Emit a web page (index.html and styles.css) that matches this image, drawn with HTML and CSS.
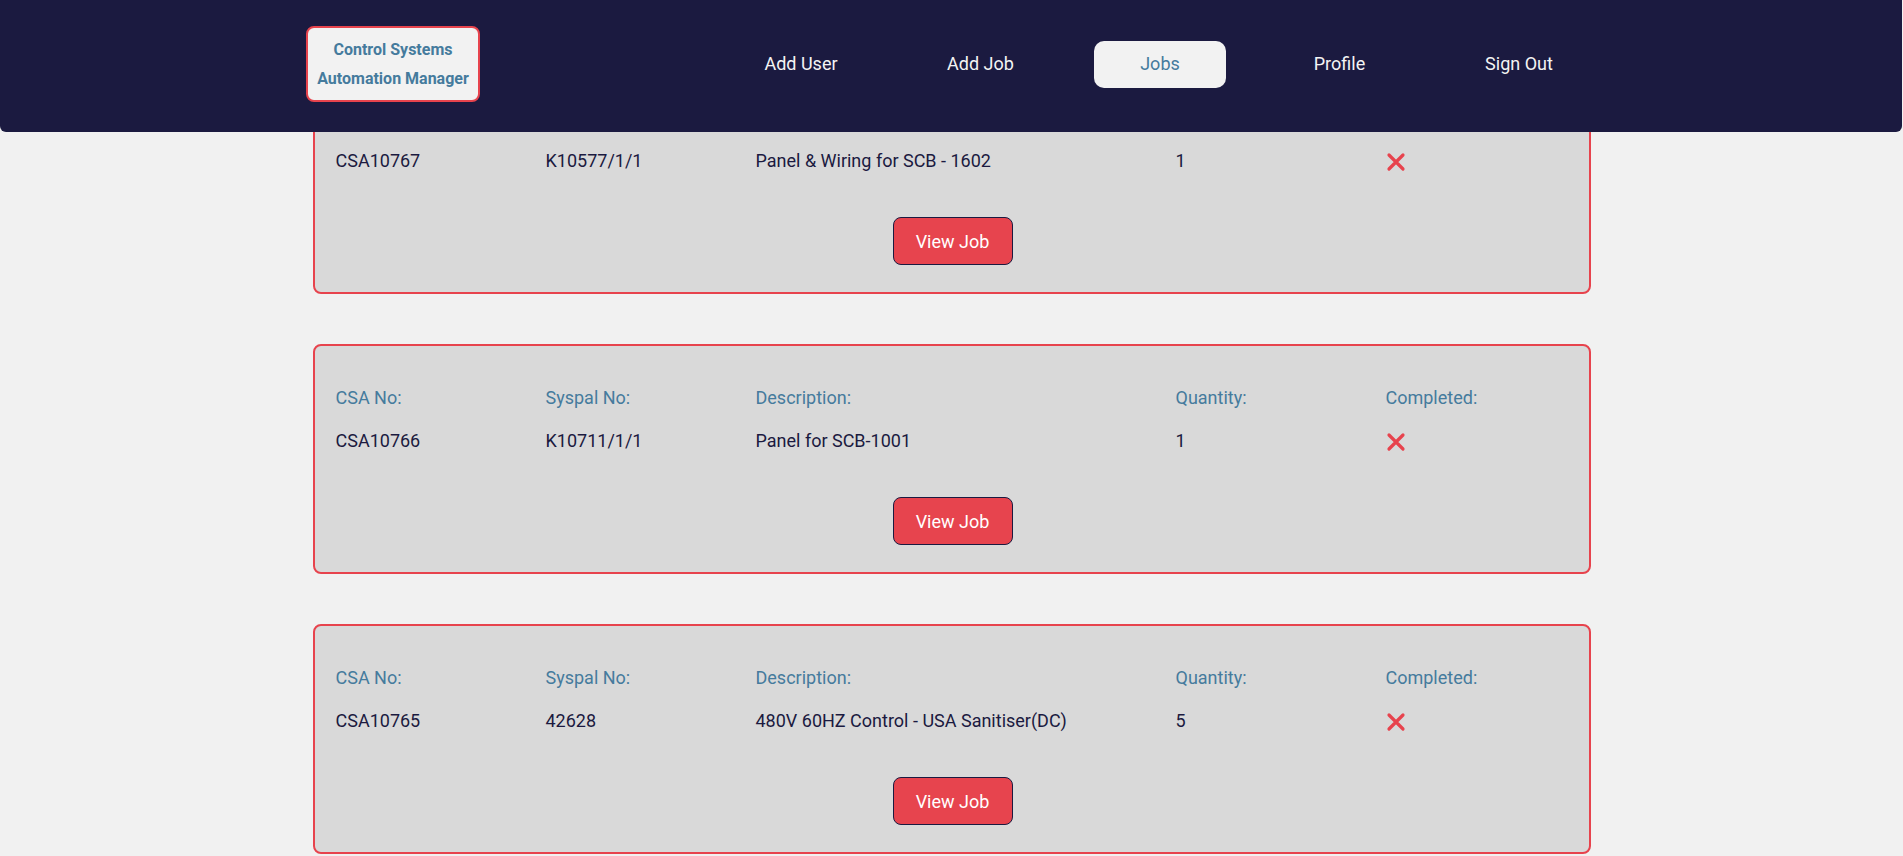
FILE: index.html
```html
<!DOCTYPE html>
<html lang="en">
<head>
<meta charset="utf-8">
<title>Jobs - Control Systems Automation Manager</title>
<link rel="stylesheet" href="styles.css">
</head>
<body>
<header class="topbar">
  <div class="logo">
    <div>Control Systems</div>
    <div>Automation Manager</div>
  </div>
  <nav class="nav">
    <a class="nav-link" href="#">Add User</a>
    <a class="nav-link" href="#">Add Job</a>
    <a class="nav-link active" href="#">Jobs</a>
    <a class="nav-link" href="#">Profile</a>
    <a class="nav-link" href="#">Sign Out</a>
  </nav>
</header>

<main class="job-list">
  <section class="card">
    <div class="row labels">
      <div>CSA No:</div><div>Syspal No:</div><div>Description:</div><div>Quantity:</div><div>Completed:</div>
    </div>
    <div class="row values">
      <div>CSA10767</div><div>K10577/1/1</div><div>Panel &amp; Wiring for SCB - 1602</div><div>1</div>
      <div><svg class="cross" viewBox="0 0 20 20"><path d="M3 3L17 17M17 3L3 17"/></svg></div>
    </div>
    <button class="view-btn">View Job</button>
  </section>

  <section class="card">
    <div class="row labels">
      <div>CSA No:</div><div>Syspal No:</div><div>Description:</div><div>Quantity:</div><div>Completed:</div>
    </div>
    <div class="row values">
      <div>CSA10766</div><div>K10711/1/1</div><div>Panel for SCB-1001</div><div>1</div>
      <div><svg class="cross" viewBox="0 0 20 20"><path d="M3 3L17 17M17 3L3 17"/></svg></div>
    </div>
    <button class="view-btn">View Job</button>
  </section>

  <section class="card">
    <div class="row labels">
      <div>CSA No:</div><div>Syspal No:</div><div>Description:</div><div>Quantity:</div><div>Completed:</div>
    </div>
    <div class="row values">
      <div>CSA10765</div><div>42628</div><div>480V 60HZ Control - USA Sanitiser(DC)</div><div>5</div>
      <div><svg class="cross" viewBox="0 0 20 20"><path d="M3 3L17 17M17 3L3 17"/></svg></div>
    </div>
    <button class="view-btn">View Job</button>
  </section>
</main>
</body>
</html>
```

FILE: styles.css
```css
* { box-sizing: border-box; }

html, body {
  margin: 0;
  padding: 0;
}

body {
  background: #f1f1f1;
  font-family: Roboto, "Liberation Sans", sans-serif;
  color: #1b1a40;
}

.topbar {
  position: fixed;
  top: 0;
  left: 0;
  right: 1px;
  z-index: 10;
  display: flex;
  align-items: center;
  padding: 26px 0 30px 306px;
  background: #1b1a40;
  border-radius: 0 0 6px 6px;
}

.logo {
  width: 174px;
  padding: 7px 9px;
  border: 2px solid #e7434d;
  border-radius: 8px;
  background: #f2f2f2;
  color: #457b9d;
  font-weight: 700;
  font-size: 16px;
  line-height: 29px;
  text-align: center;
  white-space: nowrap;
}

.nav {
  display: flex;
  gap: 47.5px;
  margin-left: 255px;
}

.nav-link {
  width: 132px;
  height: 47px;
  padding-bottom: 1px;
  display: flex;
  align-items: center;
  justify-content: center;
  color: #f4f4f4;
  text-decoration: none;
  font-size: 18px;
  border-radius: 10px;
}

.nav-link.active {
  background: #f2f2f2;
  color: #457b9d;
}

.job-list {
  display: flex;
  flex-direction: column;
  gap: 50px;
  padding-top: 64px;
}

.card {
  width: 1278px;
  margin: 0 auto;
  border: 2px solid #e7434d;
  border-radius: 8px;
  background: #d9d9d9;
  padding: 41px 19px 27px 21px;
}

.row {
  display: grid;
  grid-template-columns: 210px 210px 420px 210px 1fr;
  font-size: 18px;
  line-height: 21px;
}

.labels {
  color: #457b9d;
}

.values {
  margin-top: 22px;
  height: 22px;
  color: #1b1a40;
}

.cross {
  display: block;
  width: 20px;
  height: 20px;
  margin-top: 2px;
  fill: none;
  stroke: #e7434d;
  stroke-width: 3.2;
  stroke-linecap: round;
}

.view-btn {
  display: block;
  width: 120px;
  height: 48px;
  margin: 45px auto 0;
  padding: 0;
  border: 1px solid #1b1a40;
  border-radius: 8px;
  background: #e7444e;
  color: #ffffff;
  font-family: Roboto, "Liberation Sans", sans-serif;
  font-size: 18px;
  cursor: pointer;
}
```
